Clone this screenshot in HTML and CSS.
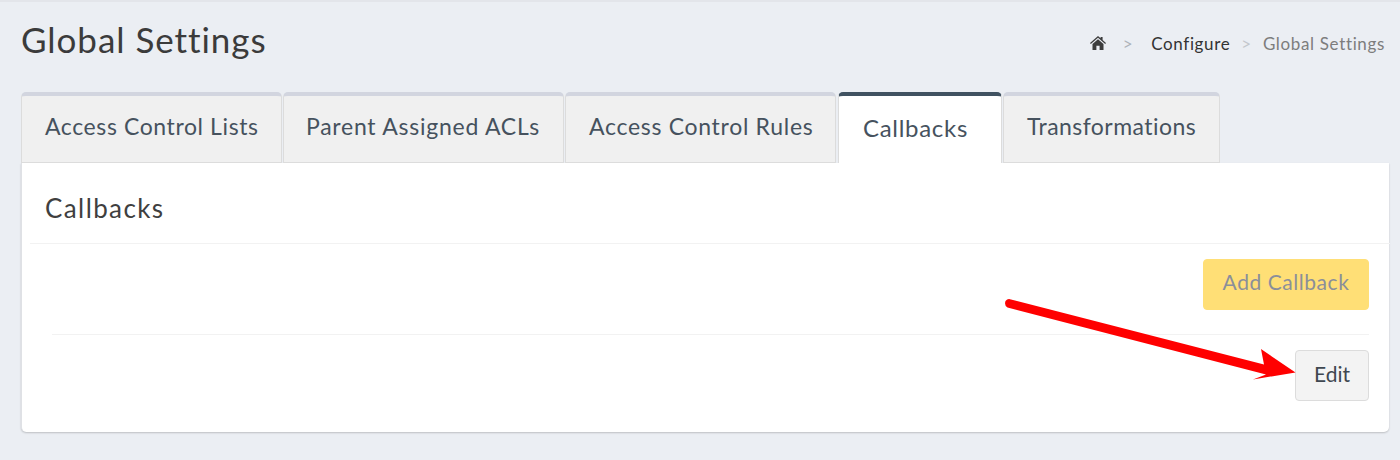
FILE: index.html
```html
<!DOCTYPE html>
<html lang="en">
<head>
<meta charset="utf-8">
<title>Global Settings</title>
<link rel="stylesheet" href="styles.css">
</head>
<body>
<div class="page">
  <header class="head">
    <h1 class="title">Global Settings</h1>
    <nav class="crumbs">
      <svg class="home" viewBox="0 0 16 14" width="16" height="14"><path fill="#3d3d3d" d="M8 0 10.600 2.300V1H12.600V4.100L16 7.100 15.200 8 8 1.800 .8 8 0 7.100ZM8 3.200 13.500 8V14H9.600V9.800H6.400V14H2.500V8Z"/></svg>
      <span class="sep first">&gt;</span>
      <span class="crumb">Configure</span>
      <span class="sep">&gt;</span>
      <span class="crumb current">Global Settings</span>
    </nav>
  </header>
  <div class="tabs">
    <div class="tab t1">Access Control Lists</div>
    <div class="tab t2">Parent Assigned ACLs</div>
    <div class="tab t3">Access Control Rules</div>
    <div class="tab active">Callbacks</div>
    <div class="tab t5">Transformations</div>
  </div>
  <section class="panel">
    <h2 class="panel-title">Callbacks</h2>
    <div class="rule-top"></div>
    <div class="body">
      <div class="row row-add"><button class="btn add">Add Callback</button></div>
      <div class="row row-edit"><button class="btn edit">Edit</button></div>
    </div>
  </section>
</div>
<svg class="arrow" viewBox="0 0 1400 460" width="1400" height="460"><path fill="#ff0000" d="M1009 299 1264 364.500 1261 349 1295.500 372.500 1253 379.500 1266 374.500 1007.500 307.500Q1004 305.500 1005.500 301 1007 299 1009 299Z"/></svg>
</body>
</html>
```
FILE: styles.css
```css
* { box-sizing: border-box; }
html, body { margin: 0; height: 460px; overflow: hidden; }
body {
  background: #ebeef3;
  border-top: 2px solid #e3e5ea;
  font-family: Lato, "Open Sans", sans-serif;
  color: #3f3f3f;
  position: relative;
}
.page { padding: 0 11px 0 21px; }
.head {
  display: flex;
  justify-content: space-between;
  height: 90px;
}
.title {
  margin: 15px 0 0;
  font-size: 35px;
  line-height: 44px;
  font-weight: 400;
  letter-spacing: .95px;
  color: #3b3b3b;
}
.crumbs {
  display: flex;
  align-items: center;
  height: 24px;
  margin-top: 29px;
  margin-right: 4px;
  font-size: 17px;
  letter-spacing: .65px;
}
.home { margin-right: 17px; }
.sep { color: #c3c7cc; margin-right: 11px; }
.sep.first { margin-right: 18px; color: #aeb3b9; }
.crumb { color: #333; margin-right: 11px; }
.crumb.current { color: #7d7d7d; margin-right: 0; }
.tabs {
  display: flex;
  gap: 1px;
  height: 71px;
  align-items: flex-end;
  width: 1368px;
}
.tab {
  height: 71px;
  padding: 0 23px;
  background: #f0f0f0;
  border-top: 4px solid #d2d5df;
  border-right: 1px solid #dcdcdc;
  border-left: 1px solid #dcdcdc;
  border-bottom: 1px solid #dcdcdc;
  border-radius: 5px 5px 0 0;
  color: #46525e;
  font-size: 23px;
  letter-spacing: .6px;
  line-height: 60px;
  white-space: nowrap;
}
.t1 { width: 261px; }
.t2 { width: 281px; padding-left: 22px; letter-spacing: .75px; }
.t3 { width: 271px; letter-spacing: .7px; }
.tab.active {
  width: 164px;
  margin-left: 1px;
  padding-left: 24px;
  background: #fff;
  border-top-color: #405261;
  border-bottom: none;
  font-size: 24px;
  line-height: 64px;
  letter-spacing: .7px;
}
.t5 { width: 217px; letter-spacing: .45px; }
.panel {
  width: 1368px;
  height: 269px;
  background: #fff;
  border-radius: 0 0 5px 5px;
  border-left: 1px solid #dfe1e5;
  box-shadow: 0 1px 2px rgba(0,0,0,.2);
}
.panel-title {
  margin: 0;
  padding: 29px 0 0 23px;
  height: 80px;
  font-size: 26px;
  line-height: 32px;
  font-weight: 400;
  letter-spacing: 1.4px;
  color: #3f3f3f;
}
.rule-top { height: 1px; background: #f2f2f2; margin-left: 8px; margin-right: -1px; }
.body { padding: 0 20px 0 30px; }
.row { display: flex; justify-content: flex-end; }
.row-add { height: 91px; padding-top: 15px; border-bottom: 1px solid #f2f2f2; }
.row-edit { padding-top: 15px; }
.btn {
  height: 51px;
  border-radius: 4px;
  font-family: inherit;
  font-size: 21px;
  letter-spacing: .55px;
  line-height: 44px;
  padding: 0 0 7px;
}
.add { width: 166px; background: #ffdf76; color: #8b8f9a; border: 1px solid #ffdf76; }
.edit { width: 74px; background: #f3f3f3; color: #3f4750; border: 1px solid #dcdcdc; padding-bottom: 4px; letter-spacing: 0; }
.arrow { position: absolute; left: 0; top: -2px; pointer-events: none; }
```
